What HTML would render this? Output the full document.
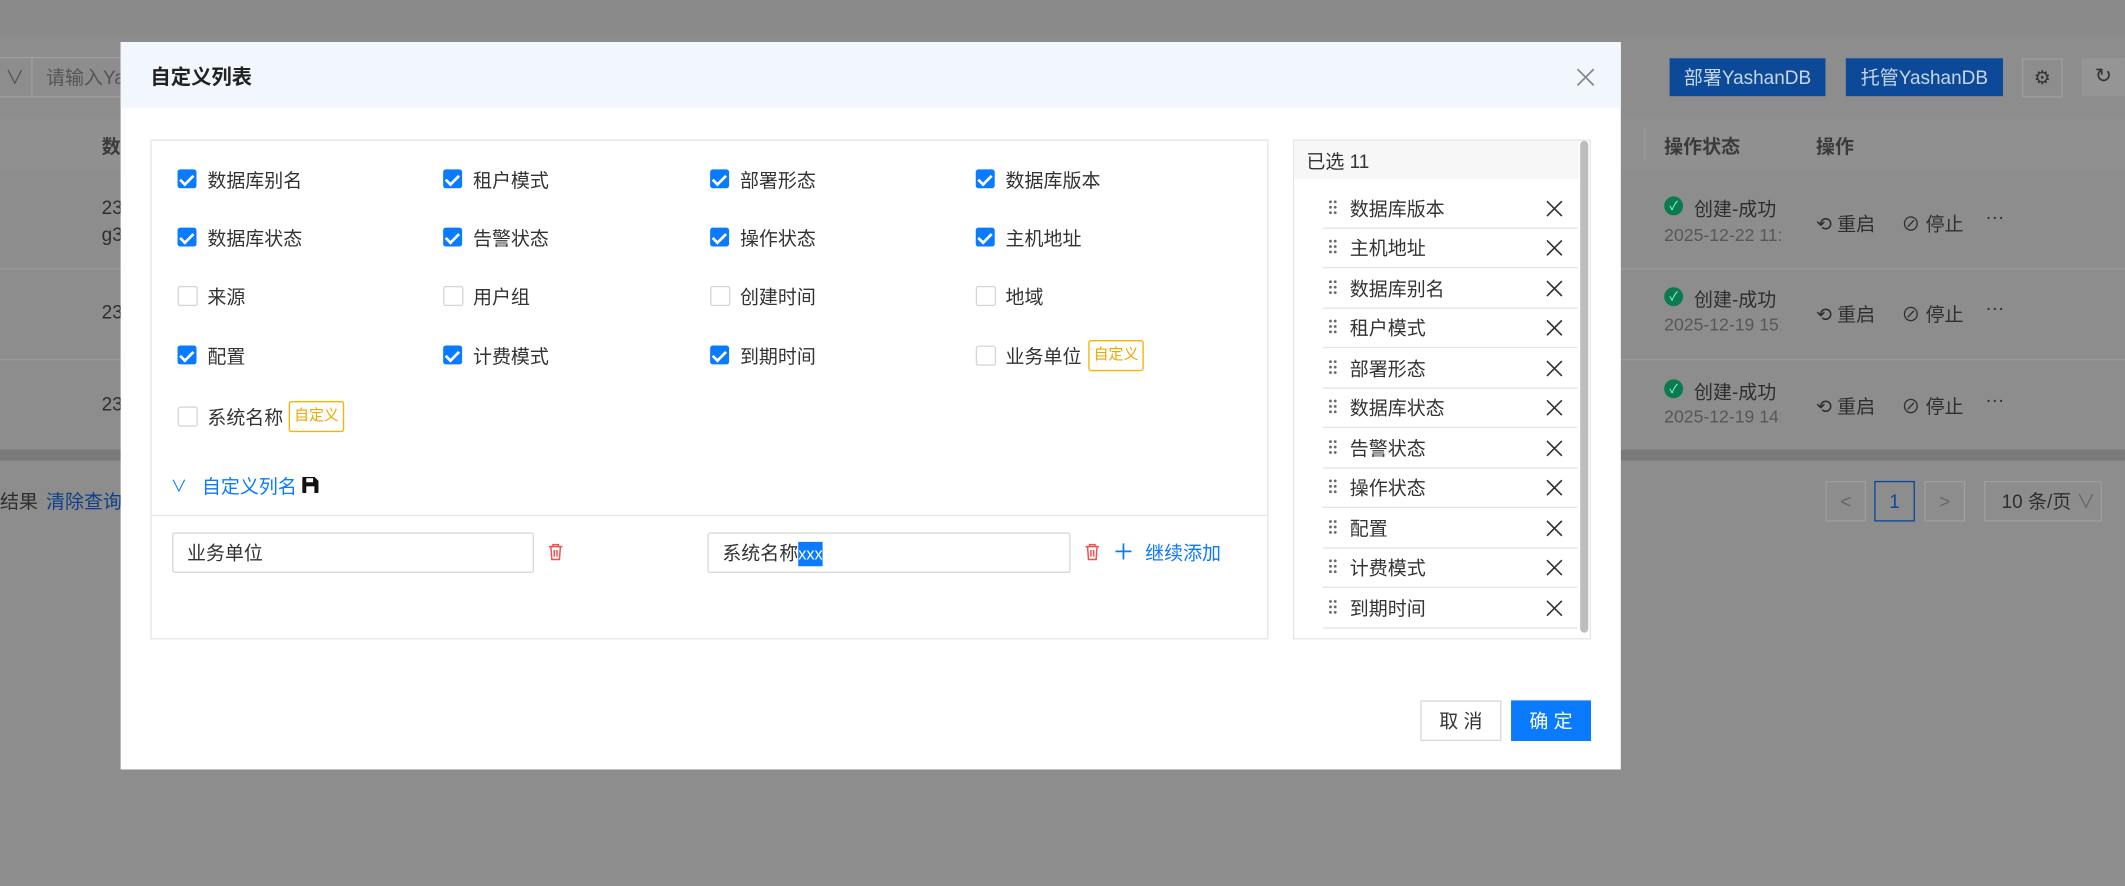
<!DOCTYPE html>
<html><head><meta charset="utf-8"><style>
html,body{margin:0;padding:0;width:2125px;height:886px;overflow:hidden;background:#8d8d8d}
#s{position:absolute;left:0;top:0;width:1568px;height:654px;transform:scale(1.3552,1.3547);transform-origin:0 0;font-family:"Liberation Sans","Noto Sans CJK SC",sans-serif;font-size:14px;color:#333}
.a{position:absolute;white-space:nowrap}
.cb{position:absolute;width:14px;height:14px;border-radius:2px;background:#0a7aff}
.cb::after{content:"";position:absolute;left:4px;top:1.5px;width:4px;height:7.5px;border:solid #fff;border-width:0 2px 2px 0;transform:rotate(45deg)}
.ub{position:absolute;width:13px;height:13px;border:1px solid #d6d6d6;border-radius:2px;background:#fff}
.tag{position:absolute;border:1px solid #f5b500;color:#f0a500;font-size:11px;padding:0 3px;height:21px;line-height:21px;border-radius:2px}
.row{position:absolute;left:976px;width:188px;height:29px;border-bottom:1px solid #e5e5e5}
.row .d{position:absolute;left:4px;top:8px;width:7px;height:12px;background:radial-gradient(circle,#666 0.9px,transparent 1.2px) 0 0/3.5px 4px}
.row .t{position:absolute;left:20px;top:5px}
.row svg{position:absolute;left:165px;top:9px}
.bg{color:#2e2e2e}
</style></head><body><div id="s">
<div class="a" style="left:0;top:0;width:1568px;height:26px;background:#8a8a8a"></div>
<div class="a" style="left:0;top:42px;width:95px;height:28px;border:1px solid #9e9e9e;border-left:none"></div>
<div class="a bg" style="left:4px;top:47px;color:#555">∨</div>
<div class="a" style="left:23px;top:42px;width:1px;height:29px;background:#9e9e9e"></div>
<div class="a" style="left:34px;top:47px;color:#555">请输入Yas</div>
<div class="a" style="left:1232px;top:43px;width:115px;height:28px;background:#0c4a99;color:#c8d6ea;text-align:center;line-height:28px">部署YashanDB</div>
<div class="a" style="left:1362px;top:43px;width:116px;height:28px;background:#0c4a99;color:#c8d6ea;text-align:center;line-height:28px">托管YashanDB</div>
<div class="a" style="left:1492px;top:43px;width:28px;height:27px;border:1px solid #9e9e9e;text-align:center;line-height:27px;color:#333">⚙</div>
<div class="a" style="left:1536px;top:43px;width:32px;height:28px;background:#959595;text-align:center;line-height:28px;color:#333;font-size:15px">↻</div>
<div class="a" style="left:0;top:88px;width:1568px;height:37px;background:#909090"></div>
<div class="a" style="left:75px;top:98px;font-weight:bold;color:#3a3a3a">数</div>
<div class="a" style="left:1228px;top:98px;font-weight:bold;color:#3a3a3a">操作状态</div>
<div class="a" style="left:1340px;top:98px;font-weight:bold;color:#3a3a3a">操作</div>
<div class="a" style="left:1213px;top:94px;width:1px;height:24px;background:#999"></div>
<div class="a" style="left:0;top:198px;width:1568px;height:1px;background:#999"></div>
<div class="a" style="left:0;top:265px;width:1568px;height:1px;background:#999"></div>
<div class="a bg" style="left:75px;top:145px">23</div><div class="a bg" style="left:75px;top:165px">g3</div>
<div class="a bg" style="left:75px;top:222px">23</div><div class="a bg" style="left:75px;top:290px">23</div>
<div class="a" style="left:0;top:332px;width:1568px;height:8px;background:#7a7a7a"></div>
<div class="a bg" style="left:0;top:360px">结果</div>
<div class="a" style="left:34px;top:360px;color:#0d3f8a">清除查询</div>
<div class="a" style="left:1347px;top:355px;width:28px;height:28px;border:1px solid #9e9e9e;color:#666;text-align:center;line-height:28px">&lt;</div>
<div class="a" style="left:1383px;top:355px;width:28px;height:28px;border:1px solid #0c4a99;color:#0c4a99;text-align:center;line-height:28px">1</div>
<div class="a" style="left:1420px;top:355px;width:28px;height:28px;border:1px solid #9e9e9e;color:#666;text-align:center;line-height:28px">&gt;</div>
<div class="a bg" style="left:1464px;top:355px;width:85px;height:28px;border:1px solid #9e9e9e;line-height:28px;text-indent:12px">10 条/页 <span style="color:#666">∨</span></div>
<div class="a" style="left:1228px;top:145px;width:14px;height:14px;border-radius:50%;background:#0b7a4e;color:#9fd;font-size:9px;text-align:center;line-height:14px">✓</div>
<div class="a bg" style="left:1250px;top:144px">创建-成功</div>
<div class="a" style="left:1228px;top:166px;color:#575757;font-size:13px;width:86px;overflow:hidden">2025-12-22 11:14</div>
<div class="a bg" style="left:1340px;top:155px">⟲ 重启</div><div class="a bg" style="left:1403px;top:155px">⊘ 停止</div><div class="a bg" style="left:1465px;top:152px">···</div>
<div class="a" style="left:1228px;top:212px;width:14px;height:14px;border-radius:50%;background:#0b7a4e;color:#9fd;font-size:9px;text-align:center;line-height:14px">✓</div>
<div class="a bg" style="left:1250px;top:211px">创建-成功</div>
<div class="a" style="left:1228px;top:232px;color:#575757;font-size:13px;width:86px;overflow:hidden">2025-12-19 15:07</div>
<div class="a bg" style="left:1340px;top:222px">⟲ 重启</div><div class="a bg" style="left:1403px;top:222px">⊘ 停止</div><div class="a bg" style="left:1465px;top:219px">···</div>
<div class="a" style="left:1228px;top:280px;width:14px;height:14px;border-radius:50%;background:#0b7a4e;color:#9fd;font-size:9px;text-align:center;line-height:14px">✓</div>
<div class="a bg" style="left:1250px;top:279px">创建-成功</div>
<div class="a" style="left:1228px;top:300px;color:#575757;font-size:13px;width:86px;overflow:hidden">2025-12-19 14:55</div>
<div class="a bg" style="left:1340px;top:290px">⟲ 重启</div><div class="a bg" style="left:1403px;top:290px">⊘ 停止</div><div class="a bg" style="left:1465px;top:287px">···</div>

<div class="a" style="left:89px;top:31px;width:1107px;height:537px;background:#fff"></div>
<div class="a" style="left:89px;top:31px;width:1107px;height:49px;background:#f2f7fd"></div>
<div class="a" style="left:111px;top:46px;font-size:15px;font-weight:bold;color:#222">自定义列表</div>
<svg class="a" style="left:1163px;top:50px" width="14" height="14"><path d="M1 1L13 13M13 1L1 13" stroke="#888" stroke-width="1.3"/></svg>

<div class="a" style="left:111px;top:103px;width:823px;height:367px;border:1px solid #e6e6e6"></div>
<div class="a" style="left:112px;top:380px;width:823px;height:1px;background:#e6e6e6"></div>

<div class="cb" style="left:131px;top:125px"></div><div class="a" style="left:153px;top:123px">数据库别名</div>
<div class="cb" style="left:327px;top:125px"></div><div class="a" style="left:349px;top:123px">租户模式</div>
<div class="cb" style="left:524px;top:125px"></div><div class="a" style="left:546px;top:123px">部署形态</div>
<div class="cb" style="left:720px;top:125px"></div><div class="a" style="left:742px;top:123px">数据库版本</div>
<div class="cb" style="left:131px;top:168px"></div><div class="a" style="left:153px;top:166px">数据库状态</div>
<div class="cb" style="left:327px;top:168px"></div><div class="a" style="left:349px;top:166px">告警状态</div>
<div class="cb" style="left:524px;top:168px"></div><div class="a" style="left:546px;top:166px">操作状态</div>
<div class="cb" style="left:720px;top:168px"></div><div class="a" style="left:742px;top:166px">主机地址</div>
<div class="ub" style="left:131px;top:211px"></div><div class="a" style="left:153px;top:209px">来源</div>
<div class="ub" style="left:327px;top:211px"></div><div class="a" style="left:349px;top:209px">用户组</div>
<div class="ub" style="left:524px;top:211px"></div><div class="a" style="left:546px;top:209px">创建时间</div>
<div class="ub" style="left:720px;top:211px"></div><div class="a" style="left:742px;top:209px">地域</div>
<div class="cb" style="left:131px;top:255px"></div><div class="a" style="left:153px;top:253px">配置</div>
<div class="cb" style="left:327px;top:255px"></div><div class="a" style="left:349px;top:253px">计费模式</div>
<div class="cb" style="left:524px;top:255px"></div><div class="a" style="left:546px;top:253px">到期时间</div>
<div class="ub" style="left:720px;top:255px"></div><div class="a" style="left:742px;top:253px">业务单位</div>
<div class="tag" style="left:803px;top:251px">自定义</div>
<div class="ub" style="left:131px;top:300px"></div><div class="a" style="left:153px;top:298px">系统名称</div>
<div class="tag" style="left:213px;top:296px">自定义</div>

<div class="a" style="left:126px;top:350px;color:#0a7aff;font-size:12px">∨</div>
<div class="a" style="left:149px;top:349px;color:#0a7aff">自定义列名</div>
<svg class="a" style="left:223px;top:352px" width="12" height="12"><path d="M0 1a1 1 0 0 1 1-1h8l3 3v8a1 1 0 0 1-1 1H1a1 1 0 0 1-1-1z" fill="#111"/><rect x="3" y="1" width="5" height="3" fill="#fff"/><rect x="3" y="7" width="6" height="5" fill="#fff"/></svg>

<div class="a" style="left:127px;top:393px;width:265px;height:28px;border:1px solid #d9d9d9;border-radius:2px"></div>
<div class="a" style="left:138px;top:398px">业务单位</div>
<div class="a" style="left:522px;top:393px;width:266px;height:28px;border:1px solid #d9d9d9;border-radius:2px"></div>
<div class="a" style="left:533px;top:398px">系统名称<span style="background:#0a7aff;color:#fff;font-size:12px;padding:2px 0">xxx</span></div>
<svg class="a" style="left:404px;top:401px" width="12" height="13"><path d="M1 2.5h10M4 2.5V1h4v1.5M2.5 2.5l.7 9.5h5.6l.7-9.5M5 5v5M7 5v5" stroke="#f05050" stroke-width="1.1" fill="none"/></svg>
<svg class="a" style="left:800px;top:401px" width="12" height="13"><path d="M1 2.5h10M4 2.5V1h4v1.5M2.5 2.5l.7 9.5h5.6l.7-9.5M5 5v5M7 5v5" stroke="#f05050" stroke-width="1.1" fill="none"/></svg>
<svg class="a" style="left:823px;top:401px" width="12" height="12"><path d="M6 0v12M0 6h12" stroke="#0a7aff" stroke-width="1.3"/></svg>
<div class="a" style="left:845px;top:398px;color:#0a7aff">继续添加</div>

<div class="a" style="left:954px;top:103px;width:218px;height:367px;border:1px solid #e6e6e6"></div>
<div class="a" style="left:955px;top:104px;width:210px;height:28px;background:#f7f7f7"></div>
<div class="a" style="left:964px;top:109px">已选 11</div>
<div class="a" style="left:1166px;top:104px;width:6px;height:363px;background:#bdbdbd;border-radius:3px"></div>
<div class="row" style="top:139px"><div class="d"></div><div class="t">数据库版本</div><svg width="12" height="12"><path d="M0.5 0.5L11.5 11.5M11.5 0.5L0.5 11.5" stroke="#333" stroke-width="1.2"/></svg></div>
<div class="row" style="top:168px"><div class="d"></div><div class="t">主机地址</div><svg width="12" height="12"><path d="M0.5 0.5L11.5 11.5M11.5 0.5L0.5 11.5" stroke="#333" stroke-width="1.2"/></svg></div>
<div class="row" style="top:198px"><div class="d"></div><div class="t">数据库别名</div><svg width="12" height="12"><path d="M0.5 0.5L11.5 11.5M11.5 0.5L0.5 11.5" stroke="#333" stroke-width="1.2"/></svg></div>
<div class="row" style="top:227px"><div class="d"></div><div class="t">租户模式</div><svg width="12" height="12"><path d="M0.5 0.5L11.5 11.5M11.5 0.5L0.5 11.5" stroke="#333" stroke-width="1.2"/></svg></div>
<div class="row" style="top:257px"><div class="d"></div><div class="t">部署形态</div><svg width="12" height="12"><path d="M0.5 0.5L11.5 11.5M11.5 0.5L0.5 11.5" stroke="#333" stroke-width="1.2"/></svg></div>
<div class="row" style="top:286px"><div class="d"></div><div class="t">数据库状态</div><svg width="12" height="12"><path d="M0.5 0.5L11.5 11.5M11.5 0.5L0.5 11.5" stroke="#333" stroke-width="1.2"/></svg></div>
<div class="row" style="top:316px"><div class="d"></div><div class="t">告警状态</div><svg width="12" height="12"><path d="M0.5 0.5L11.5 11.5M11.5 0.5L0.5 11.5" stroke="#333" stroke-width="1.2"/></svg></div>
<div class="row" style="top:345px"><div class="d"></div><div class="t">操作状态</div><svg width="12" height="12"><path d="M0.5 0.5L11.5 11.5M11.5 0.5L0.5 11.5" stroke="#333" stroke-width="1.2"/></svg></div>
<div class="row" style="top:375px"><div class="d"></div><div class="t">配置</div><svg width="12" height="12"><path d="M0.5 0.5L11.5 11.5M11.5 0.5L0.5 11.5" stroke="#333" stroke-width="1.2"/></svg></div>
<div class="row" style="top:404px"><div class="d"></div><div class="t">计费模式</div><svg width="12" height="12"><path d="M0.5 0.5L11.5 11.5M11.5 0.5L0.5 11.5" stroke="#333" stroke-width="1.2"/></svg></div>
<div class="row" style="top:434px"><div class="d"></div><div class="t">到期时间</div><svg width="12" height="12"><path d="M0.5 0.5L11.5 11.5M11.5 0.5L0.5 11.5" stroke="#333" stroke-width="1.2"/></svg></div>

<div class="a" style="left:1048px;top:517px;width:58px;height:28px;border:1px solid #d9d9d9;text-align:center;line-height:28px">取 消</div>
<div class="a" style="left:1115px;top:517px;width:59px;height:30px;background:#0a7aff;color:#fff;text-align:center;line-height:30px">确 定</div>
</div></body></html>
